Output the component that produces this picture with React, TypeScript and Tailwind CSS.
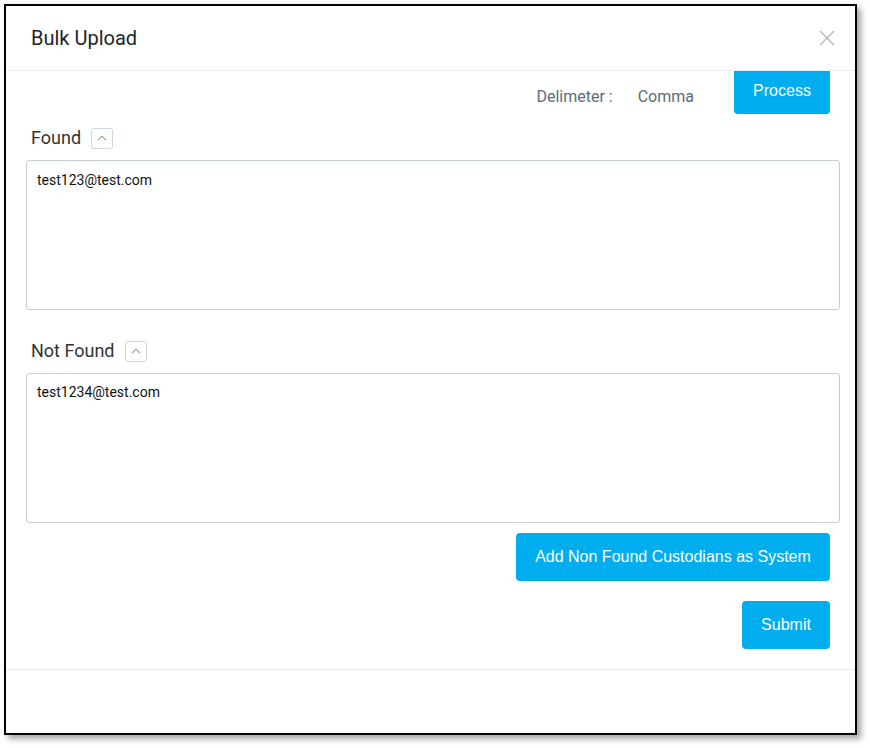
import React from "react";

function Toggle() {
  return (
    <span className="ml-[10px] inline-flex h-[21px] w-[22px] items-center justify-center rounded-[3px] border border-[#cfd5e3] bg-white">
      <svg width="10" height="6" viewBox="0 0 10 6" fill="none">
        <path d="M1 5.2L5 1.2L9 5.2" stroke="#8a93a8" strokeWidth="1.1" />
      </svg>
    </span>
  );
}

export default function App() {
  return (
    <div className="h-[748px] w-[870px] bg-white pl-[4px] pt-[4px]" style={{ fontFamily: "Roboto, 'Liberation Sans', sans-serif" }}>
      <div className="flex h-[731px] w-[853px] flex-col border-2 border-black bg-white shadow-[4px_4px_6px_rgba(0,0,0,0.35)]">
        {/* header */}
        <div className="relative z-10 flex h-[65px] items-center justify-between border-b border-[#e9ecef] bg-white pl-[25px] pr-[20px]">
          <h1 className="text-[20px] leading-none text-[#212529]">Bulk Upload</h1>
          <svg width="16" height="16" viewBox="0 0 16 16" fill="none">
            <path d="M1 1L15 15M15 1L1 15" stroke="#aab1c0" strokeWidth="1.1" />
          </svg>
        </div>
        {/* body */}
        <div className="flex flex-1 flex-col border-b border-[#e9ecef] px-[20px]">
          <div className="flex items-start justify-end pr-[5px]">
            <span className="mt-[17px] text-[16px] leading-[18px] text-[#5b6b7c]">Delimeter :</span>
            <span className="ml-[25px] mt-[17px] text-[16px] leading-[18px] text-[#5b6b7c]">Comma</span>
            <button
              className="ml-[40px] w-[96px] rounded-b-[4px] bg-[#00aeef] pt-[10px] pb-[13px] text-center text-[16px] leading-[20px] text-white"
              style={{ fontFamily: "'Liberation Sans', Arial, sans-serif" }}
            >
              Process
            </button>
          </div>
          <div className="mt-[13px] flex items-center pl-[5px]">
            <span className="text-[18px] leading-[22px] text-[#333]">Found</span>
            <Toggle />
          </div>
          <div className="mt-[11px] h-[150px] w-[814px] rounded-[3px] border border-[#c6ccd8] px-[10px] pt-[11px] text-[14px] leading-[16px] text-[#111]">
            test123@test.com
          </div>
          <div className="mt-[30px] flex items-center pl-[5px]">
            <span className="text-[18px] leading-[22px] text-[#333]">Not Found</span>
            <Toggle />
          </div>
          <div className="mt-[11px] h-[150px] w-[814px] rounded-[3px] border border-[#c6ccd8] px-[10px] pt-[10px] text-[14px] leading-[16px] text-[#111]">
            test1234@test.com
          </div>
          <div className="mt-[10px] flex justify-end pr-[5px]" style={{ fontFamily: "'Liberation Sans', Arial, sans-serif" }}>
            <button className="h-[48px] w-[314px] rounded-[4px] bg-[#00aeef] text-[16px] text-white">
              Add Non Found Custodians as System
            </button>
          </div>
          <div className="mt-[20px] flex justify-end pr-[5px]" style={{ fontFamily: "'Liberation Sans', Arial, sans-serif" }}>
            <button className="h-[48px] w-[88px] rounded-[4px] bg-[#00aeef] text-[16px] text-white">Submit</button>
          </div>
        </div>
        <div className="h-[63px]" />
      </div>
    </div>
  );
}
